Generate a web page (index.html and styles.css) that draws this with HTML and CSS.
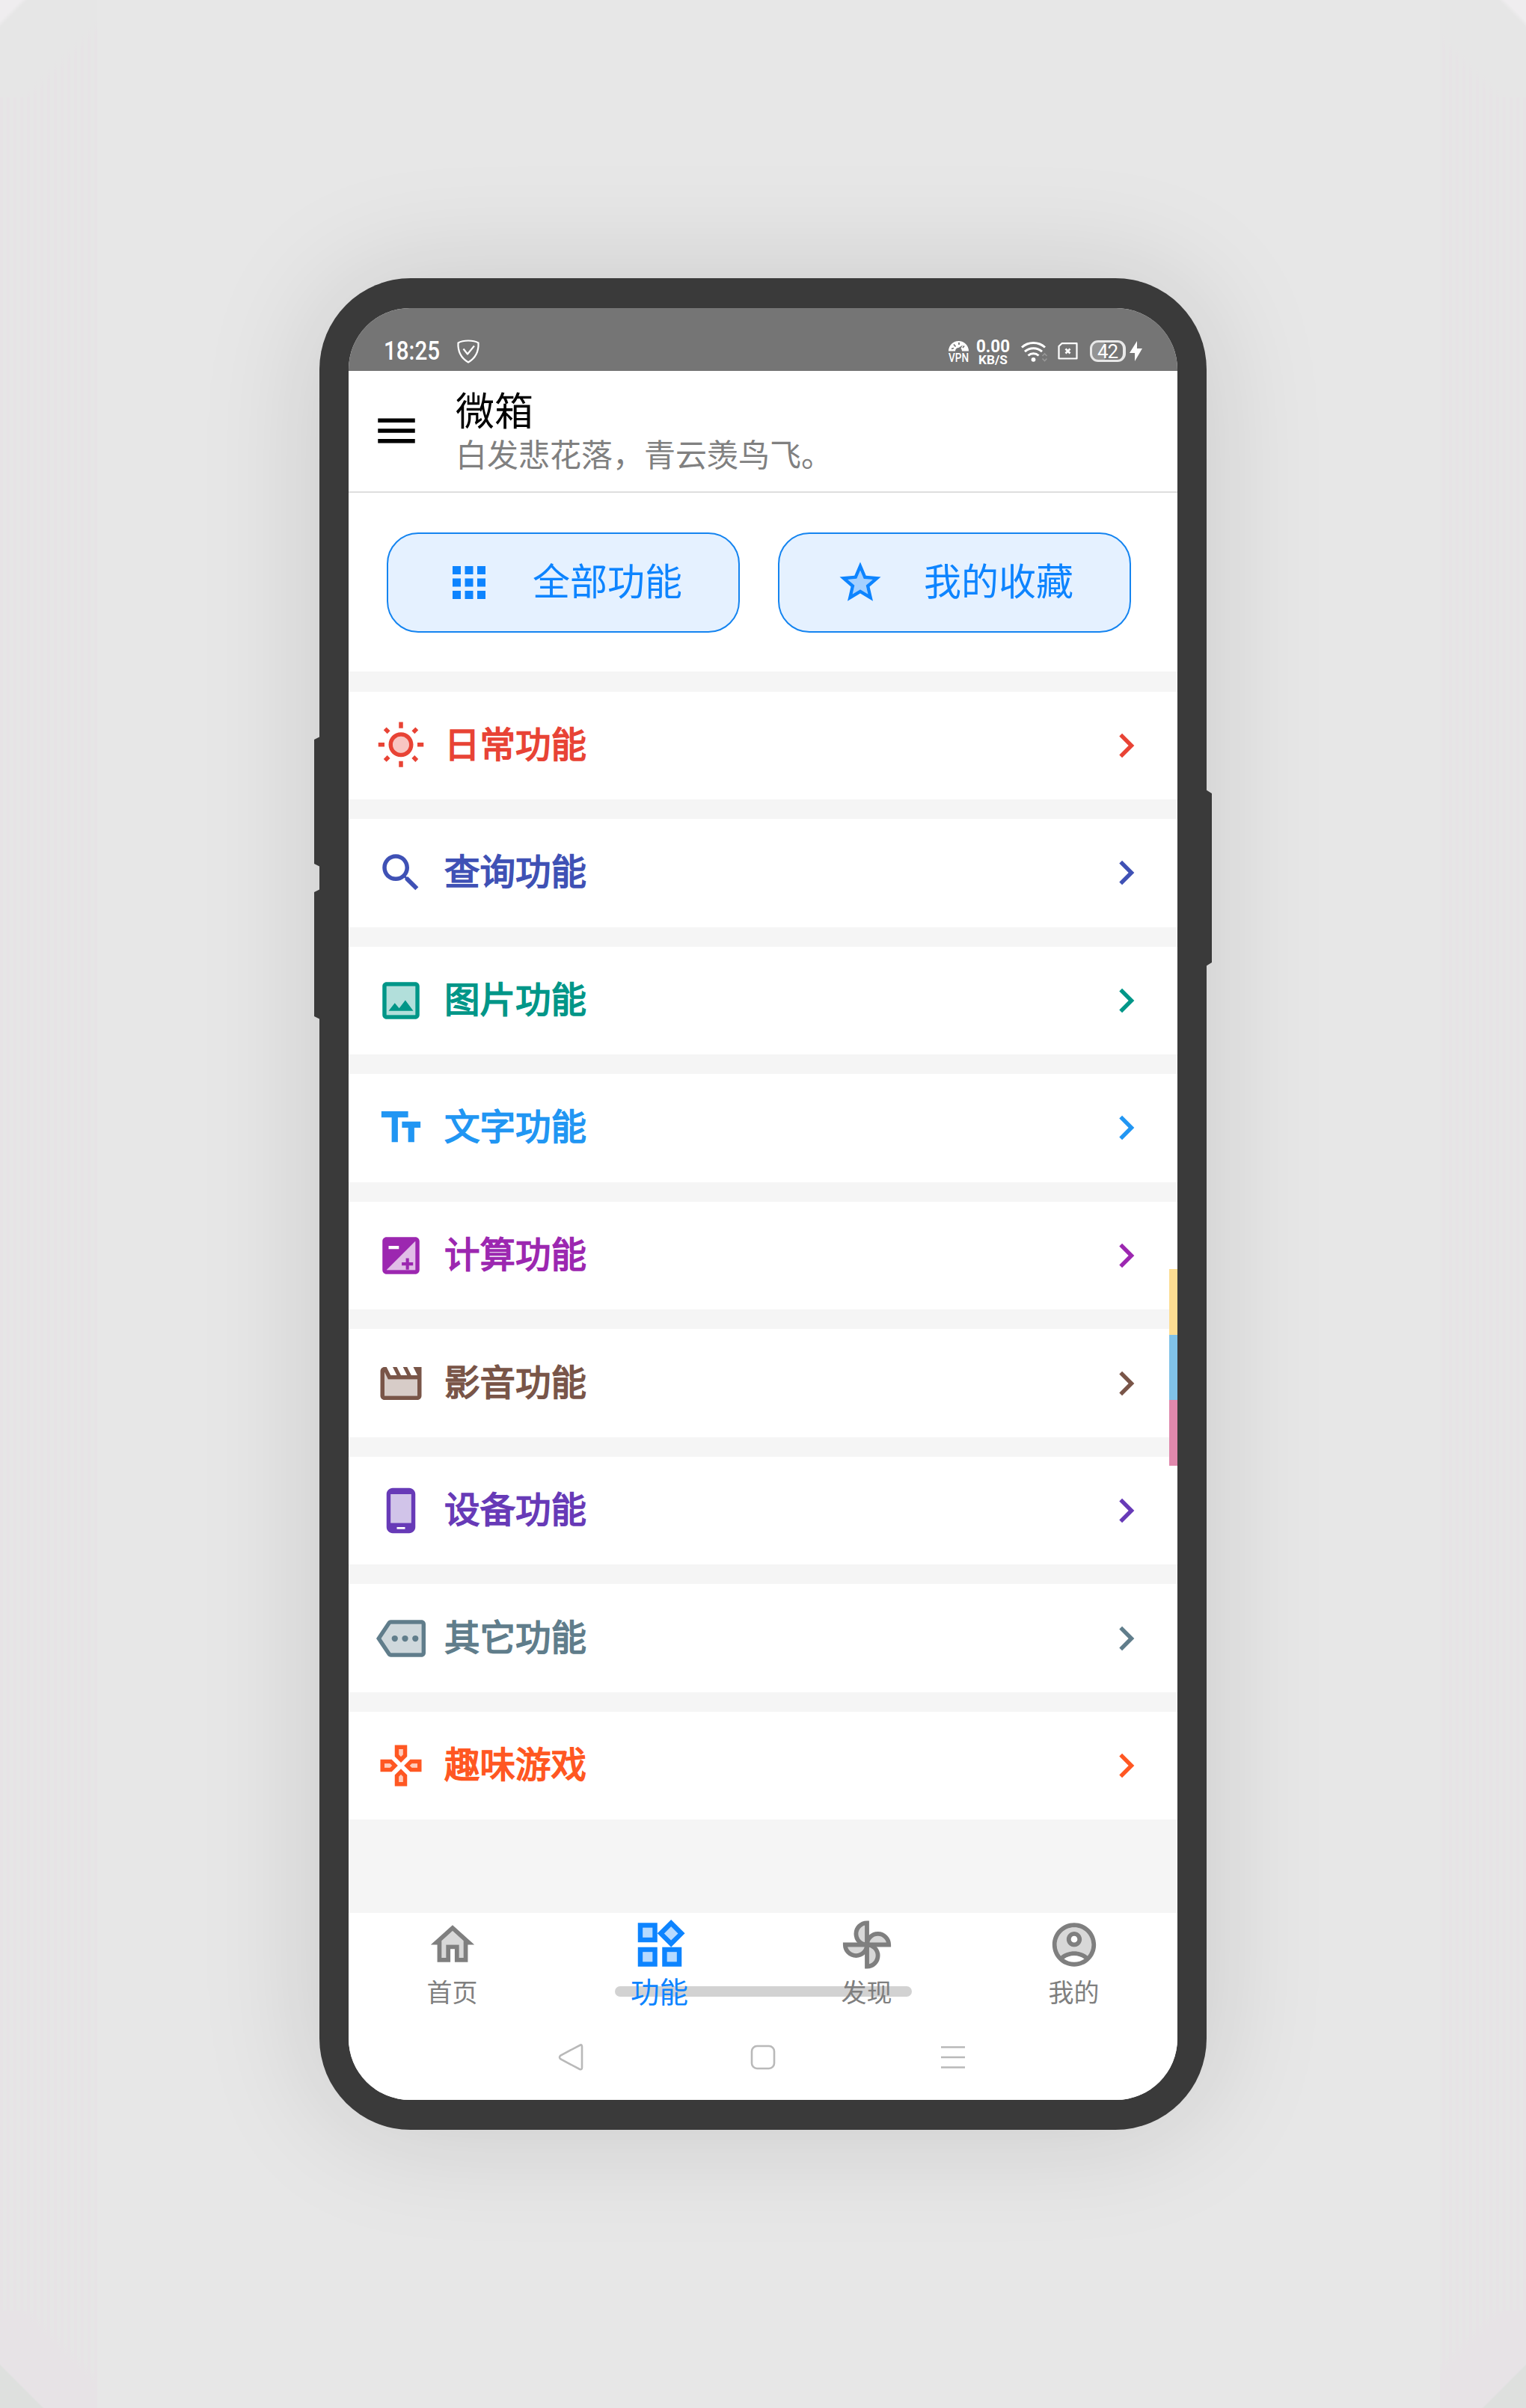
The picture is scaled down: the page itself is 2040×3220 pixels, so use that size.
FILE: index.html
```html
<!DOCTYPE html>
<html lang="zh-CN">
<head>
<meta charset="utf-8">
<title>微箱</title>
<link rel="stylesheet" href="styles.css">
</head>
<body>
<div class="phone">
  <i class="key key-up"></i><i class="key key-down"></i><i class="key key-power"></i>
  <div class="screen">
    <div class="status">
      <svg class="clock" viewBox="0 0 78 36"><text x="0" y="29" font-size="35" textLength="75" lengthAdjust="spacingAndGlyphs">18:25</text></svg>
      <svg class="shield" viewBox="0 0 30 32"><path d="M15 1.500C10 1.500 5 2.500 1.500 4.500C1 14 4 24 15 30.500C26 24 29 14 28.500 4.500C25 2.500 20 1.500 15 1.500zM8.500 12.500l5.500 7L23 8.500" fill="none" stroke="#fff" stroke-width="2.200" stroke-linejoin="round"/></svg>
      <svg class="vpn" viewBox="0 0 27 30"><path d="M0 14.500A13.500 13.500 0 0 1 27 14.500H18a4.500 4.500 0 0 0-1.500-3.500L19 6.500l-5.500 3.500A4.500 4.500 0 0 0 9 14.500z" fill="#fff"/><path d="M4 11.500l3-1M7 5.500l2.500 3M14 3v3M21 7.500l-2 2.500" stroke="#757575" stroke-width="1.800"/><text x="0" y="29" font-size="17" textLength="27" lengthAdjust="spacingAndGlyphs">VPN</text></svg>
      <svg class="speed" viewBox="0 0 46 34"><text x="1" y="17.500" font-size="24" textLength="45" lengthAdjust="spacingAndGlyphs">0.00</text><text x="4" y="34" font-size="17" textLength="39" lengthAdjust="spacingAndGlyphs">KB/S</text></svg>
      <svg class="wifi" viewBox="0 0 35 28"><g fill="none" stroke="#fff" stroke-width="3"><path d="M1 8.500A23 23 0 0 1 32 8.500"/><path d="M5 14.200A17 17 0 0 1 28 14.200"/><path d="M9.500 19.500A10.500 10.500 0 0 1 23.500 19.500"/></g><circle cx="16.500" cy="24.800" r="2.900" fill="#fff"/><path d="M28.500 20l3-3 3 3M28.500 23.500l3 3 3-3" fill="none" stroke="#979797" stroke-width="1.600"/></svg>
      <svg class="sim" viewBox="0 0 27 23"><path d="M5.500 1.200H25.500V21.500H1.500V5z" fill="none" stroke="#fff" stroke-width="2.200" stroke-linejoin="round"/><path d="M10.500 8.500l6 6M16.500 8.500l-6 6" stroke="#fff" stroke-width="2.600"/></svg>
      <div class="battery"><span>42</span></div>
      <svg class="bolt" viewBox="0 0 17 27"><path d="M10 0L0 16h7v11L17 10h-7z" fill="#fff"/></svg>
    </div>
    <header class="bar">
      <svg class="ic menu" viewBox="0 0 24 24"><path d="M3 18h18v-2H3v2zm0-5h18v-2H3v2zm0-7v2h18V6H3z"/></svg>
      <div class="titles"><h1>微箱</h1><p>白发悲花落，青云羡鸟飞。</p></div>
    </header>
    <section class="quick">
      <a class="pill"><svg class="ic" viewBox="0 0 24 24"><path d="M4 8h4V4H4zM10 8h4V4h-4zM16 8h4V4h-4zM4 14h4v-4H4zM10 14h4v-4h-4zM16 14h4v-4h-4zM4 20h4v-4H4zM10 20h4v-4h-4zM16 20h4v-4h-4z"/></svg><span>全部功能</span></a>
      <a class="pill"><svg class="ic" viewBox="0 0 24 24"><path opacity=".3" d="M12 15.400l-3.760 2.270 1-4.280-3.320-2.880 4.380-.380L12 6.100l1.710 4.040 4.380.380-3.320 2.880 1 4.280z"/><path d="M22 9.240l-7.190-.620L12 2 9.190 8.630 2 9.240l5.460 4.730L5.820 21 12 17.270 18.180 21l-1.630-7.030L22 9.240zM12 15.400l-3.760 2.270 1-4.280-3.320-2.880 4.380-.380L12 6.100l1.710 4.040 4.380.380-3.320 2.880 1 4.280L12 15.400z"/></svg><span>我的收藏</span></a>
    </section>
    <main class="list">
      <a class="row red"><svg class="ic" viewBox="0 0 24 24"><circle cx="12" cy="11.500" r="4" opacity=".3"/><path d="M6.760 4.840l-1.800-1.790-1.410 1.410 1.790 1.790 1.420-1.410zM1 10.500h3v2H1zM11 .550h2V3.500h-2zM20.450 4.460l-1.410-1.410-1.790 1.790 1.410 1.410 1.790-1.790zM17.240 18.160l1.790 1.800 1.410-1.410-1.800-1.790-1.400 1.400zM20 10.500h3v2h-3zM12 5.500c-3.310 0-6 2.690-6 6s2.690 6 6 6 6-2.690 6-6-2.690-6-6-6zm0 10c-2.210 0-4-1.790-4-4s1.790-4 4-4 4 1.790 4 4-1.790 4-4 4zM11 19.500h2v2.950h-2zM3.550 18.540l1.410 1.410 1.790-1.800-1.410-1.410-1.790 1.800z"/></svg><span>日常功能</span><svg class="go" viewBox="0 0 24 24"><path d="M10 6L8.590 7.410 13.170 12l-4.580 4.590L10 18l6-6z"/></svg></a>
      <a class="row indigo"><svg class="ic" viewBox="0 0 24 24"><path d="M15.500 14h-.790l-.280-.270C15.410 12.590 16 11.110 16 9.500 16 5.910 13.090 3 9.500 3S3 5.910 3 9.500 5.910 16 9.500 16c1.610 0 3.090-.590 4.230-1.570l.270.280v.790l5 4.990L20.490 19l-4.990-5zm-6 0C7.010 14 5 11.990 5 9.500S7.010 5 9.500 5 14 7.010 14 9.500 11.990 14 9.500 14z"/></svg><span>查询功能</span><svg class="go" viewBox="0 0 24 24"><path d="M10 6L8.590 7.410 13.170 12l-4.580 4.590L10 18l6-6z"/></svg></a>
      <a class="row teal"><svg class="ic" viewBox="0 0 24 24"><path opacity=".3" d="M5 5h14v14H5z"/><path d="M19 3H5c-1.100 0-2 .900-2 2v14c0 1.100.900 2 2 2h14c1.100 0 2-.900 2-2V5c0-1.100-.900-2-2-2zm0 16H5V5h14v14zM14.140 11.860l-3 3.870L9 13.140 6 17h12z"/></svg><span>图片功能</span><svg class="go" viewBox="0 0 24 24"><path d="M10 6L8.590 7.410 13.170 12l-4.580 4.590L10 18l6-6z"/></svg></a>
      <a class="row blue"><svg class="ic" viewBox="0 0 24 24"><path d="M2.500 4v3h5v12h3V7h5V4h-13zM21.500 9h-9v3h3v7h3v-7h3V9z"/></svg><span>文字功能</span><svg class="go" viewBox="0 0 24 24"><path d="M10 6L8.590 7.410 13.170 12l-4.580 4.590L10 18l6-6z"/></svg></a>
      <a class="row purple"><svg class="ic" viewBox="0 0 24 24"><path opacity=".3" d="M19 19V5L5 19h14z"/><path fill-rule="evenodd" d="M19 3H5c-1.100 0-2 .900-2 2v14c0 1.100.900 2 2 2h14c1.100 0 2-.900 2-2V5c0-1.100-.900-2-2-2zM19 19H5L19 5zM6 7.300h5v1.500H6z"/><path d="M14.400 13.300h1.500v2h2v1.500h-2v2h-1.500v-2h-2v-1.500h2z"/></svg><span>计算功能</span><svg class="go" viewBox="0 0 24 24"><path d="M10 6L8.590 7.410 13.170 12l-4.580 4.590L10 18l6-6z"/></svg></a>
      <a class="row brown"><svg class="ic" viewBox="0 0 24 24"><path opacity=".3" d="M5.760 10L4 6.470V18h16v-8z"/><path d="M18 4l2 4h-3l-2-4h-2l2 4h-3l-2-4H8l2 4H7L5 4H4c-1.100 0-1.990.900-1.990 2L2 18c0 1.100.900 2 2 2h16c1.100 0 2-.900 2-2V4h-4zm2 14H4V6.470L5.760 10H20v8z"/></svg><span>影音功能</span><svg class="go" viewBox="0 0 24 24"><path d="M10 6L8.590 7.410 13.170 12l-4.580 4.590L10 18l6-6z"/></svg></a>
      <a class="row violet"><svg class="ic" viewBox="0 0 24 24"><path opacity=".3" d="M7 4h10v14H7z"/><path fill-rule="evenodd" d="M16 1H8C6.340 1 5 2.340 5 4v16c0 1.660 1.340 3 3 3h8c1.660 0 3-1.340 3-3V4c0-1.660-1.340-3-3-3zM14 21h-4v-1h4zM17 18H7V4h10z"/></svg><span>设备功能</span><svg class="go" viewBox="0 0 24 24"><path d="M10 6L8.590 7.410 13.170 12l-4.580 4.590L10 18l6-6z"/></svg></a>
      <a class="row slate"><svg class="ic" viewBox="0 0 24 24"><path opacity=".3" d="M7.060 5L2.400 12l4.670 7H22V5z"/><path d="M22 3H7c-.690 0-1.230.350-1.590.880L0 12l5.410 8.110c.360.530.970.890 1.660.890H22c1.100 0 2-.900 2-2V5c0-1.100-.900-2-2-2zm0 16H7.070L2.400 12l4.660-7H22v14z"/><circle cx="9" cy="12" r="1.500"/><circle cx="14" cy="12" r="1.500"/><circle cx="19" cy="12" r="1.500"/></svg><span>其它功能</span><svg class="go" viewBox="0 0 24 24"><path d="M10 6L8.590 7.410 13.170 12l-4.580 4.590L10 18l6-6z"/></svg></a>
      <a class="row orange"><svg class="ic" viewBox="0 0 24 24"><path opacity=".3" d="M13 6.670V4h-2v2.670l1 1zM6.670 11H4v2h2.670l1-1zM11 17.330V20h2v-2.670l-1-1zM16.330 12l1 1H20v-2h-2.670z"/><path fill-rule="evenodd" d="M15 7.500V2H9v5.500l3 3 3-3zM13 6.670l-1 1-1-1V4h2zM7.500 9H2v6h5.500l3-3-3-3zM6.670 13H4v-2h2.670l1 1zM9 16.500V22h6v-5.500l-3-3-3 3zM13 20h-2v-2.670l1-1 1 1zM16.500 9l-3 3 3 3H22V9h-5.500zM20 13h-2.670l-1-1 1-1H20z"/></svg><span>趣味游戏</span><svg class="go" viewBox="0 0 24 24"><path d="M10 6L8.590 7.410 13.170 12l-4.580 4.590L10 18l6-6z"/></svg></a>
    </main>
    <nav class="tabs">
      <a class="tab"><svg viewBox="0 0 24 24"><path opacity=".3" d="M12 5.690l-5 4.500V18h2v-6h6v6h2v-7.810z"/><path d="M12 3L2 12h3v8h6v-6h2v6h6v-8h3L12 3zm5 15h-2v-6H9v6H7v-7.810l5-4.500 5 4.500V18z"/></svg><span>首页</span></a>
      <a class="tab active"><svg viewBox="0 0 24 24"><path opacity=".3" d="M5 5h4v4H5zM5 15h4v4H5zM15 15h4v4h-4zM16.660 4.520l-2.830 2.820 2.830 2.830 2.830-2.830z"/><path fill-rule="evenodd" d="M16.660 1.690L11 7.340 16.660 13l5.660-5.660zM16.660 4.520l2.830 2.830-2.830 2.830-2.830-2.830zM3 3h8v8H3zM5 5v4h4V5zM13 13h8v8h-8zM15 15v4h4v-4zM3 13h8v8H3zM5 15v4h4v-4z"/></svg><span>功能</span></a>
      <a class="tab"><svg viewBox="0 0 24 24"><g fill-opacity=".3" stroke="currentColor" stroke-width="2"><path d="M12 12V2a5 5 0 0 0 0 10z"/><path d="M12 12h10a5 5 0 0 0-10 0z"/><path d="M12 12v10a5 5 0 0 0 0-10z"/><path d="M12 12H2a5 5 0 0 0 10 0z"/></g></svg><span>发现</span></a>
      <a class="tab"><svg viewBox="0 0 24 24"><path opacity=".3" fill-rule="evenodd" d="M12 4c-4.420 0-8 3.580-8 8 0 1.950.700 3.730 1.860 5.120C7.550 15.800 9.680 15 12 15s4.450.800 6.140 2.120C19.300 15.730 20 13.950 20 12c0-4.420-3.580-8-8-8zm0 9c-1.930 0-3.500-1.570-3.500-3.500S10.070 6 12 6s3.500 1.570 3.500 3.500S13.930 13 12 13z"/><path d="M12 2C6.480 2 2 6.480 2 12s4.480 10 10 10 10-4.480 10-10S17.520 2 12 2zM7.350 18.500C8.660 17.560 10.260 17 12 17s3.340.560 4.650 1.500C15.340 19.440 13.740 20 12 20s-3.340-.560-4.650-1.500zm10.790-1.380C16.450 15.800 14.320 15 12 15s-4.450.800-6.140 2.120C4.700 15.730 4 13.950 4 12c0-4.420 3.580-8 8-8s8 3.580 8 8c0 1.950-.700 3.730-1.860 5.120zM12 6c-1.930 0-3.500 1.570-3.500 3.500S10.070 13 12 13s3.500-1.570 3.500-3.500S13.930 6 12 6zm0 5c-.830 0-1.500-.670-1.500-1.500S11.170 8 12 8s1.500.670 1.500 1.500S12.830 11 12 11z"/></svg><span>我的</span></a>
      <i class="indicator"></i>
    </nav>
    <div class="sysnav">
      <svg class="back" viewBox="0 0 34 38"><path d="M30 2.500Q32 2 32 5V33Q32 36 29 35L3.500 21.500Q.500 19 3.500 16.500z"/></svg>
      <svg class="homekey" viewBox="0 0 34 34"><rect x="2" y="2" width="30" height="30" rx="7"/></svg>
      <svg class="recent" viewBox="0 0 34 34"><path d="M1 3.500h32M1 17h32M1 30.500h32"/></svg>
    </div>
    <div class="edge"><i class="e1"></i><i class="e2"></i><i class="e3"></i></div>
  </div>
</div>
</body>
</html>
```
FILE: styles.css
```css
* { box-sizing: border-box; }
html, body { margin: 0; }
body {
  width: 2040px; height: 3220px; overflow: hidden;
  padding: 372px 0 0 427px;
  background:
    linear-gradient(45deg, #dee0de 40px, #e7e3e6 42px 110px, rgba(231, 227, 230, 0) 125px) 0 100% / 130px 130px no-repeat,
    linear-gradient(315deg, #dee0de 40px, #e7e3e6 42px 110px, rgba(231, 227, 230, 0) 125px) 100% 100% / 115px 130px no-repeat,
    linear-gradient(135deg, #efedef 20px, #e6e6e6 26px 110px, rgba(230, 230, 230, 0) 125px) 0 0 / 130px 130px no-repeat,
    linear-gradient(225deg, #efedef 20px, #e6e6e6 26px 110px, rgba(230, 230, 230, 0) 125px) 100% 0 / 115px 130px no-repeat,
    repeating-linear-gradient(90deg, #e7e3e6 0 4px, #e6e6e6 4px 9px) 0 0 / 130px 100% no-repeat,
    repeating-linear-gradient(270deg, #e7e3e6 0 4px, #e6e6e6 4px 9px) 100% 0 / 115px 100% no-repeat,
    #e7e7e7;
  font-family: Roboto, "Noto Sans CJK SC", sans-serif;
}
h1, p { margin: 0; font-weight: 400; }
svg { display: block; fill: currentColor; flex: none; overflow: visible; }
.phone {
  position: relative; width: 1186px; height: 2476px;
  padding: 40px 39px; background: #3a3a3a; border-radius: 122px;
  box-shadow: 0 0 165px rgba(0, 0, 0, .135);
}
.key { position: absolute; background: #3a3a3a; width: 8px; left: -7px; clip-path: polygon(0 4px, 100% 0, 100% 100%, 0 calc(100% - 4px)); }
.key-up { top: 613px; height: 174px; }
.key-down { top: 817px; height: 174px; }
.key-power { left: auto; right: -7px; top: 684px; height: 236px; clip-path: polygon(0 0, 100% 5px, 100% calc(100% - 5px), 0 100%); }
.screen {
  position: relative; width: 1108px; height: 2396px; overflow: hidden;
  border-radius: 82px; background: #f5f5f5;
  display: flex; flex-direction: column;
}
.status {
  height: 84px; background: #757575; color: #fff; padding: 40px 48px 9px 47px;
  display: flex; align-items: center; flex: none;
}
.clock { width: 78px; height: 36px; margin-right: 20px; font-weight: 500; }
.shield { width: 30px; height: 32px; }
.vpn { margin-left: auto; width: 27px; height: 30px; font-weight: 500; }
.speed { width: 46px; height: 34px; margin-left: 9px; font-weight: 700; }
.wifi { width: 35px; height: 28px; margin-left: 15px; }
.sim { width: 27px; height: 23px; margin-left: 14px; }
.battery {
  margin-left: 16px; width: 48px; height: 29px; border: 3px solid #e8e8e8; border-right-width: 4px; border-radius: 11px;
  background: linear-gradient(90deg, #939393 42%, transparent 42%);
  display: flex; align-items: center; justify-content: center; font-size: 26px; letter-spacing: -1px;
}
.bolt { width: 17px; height: 27px; margin-left: 5px; margin-right: -1px; }
.bar {
  height: 163px; flex: none; background: #fff; border-bottom: 2px solid #dedede;
  display: flex; align-items: center; padding-left: 31px;
}
.ic { width: 66px; height: 68px; }
.menu { color: #000; margin-top: -1px; }
.titles { margin-left: 46px; margin-top: 7px; color: #000; }
.titles h1 { font-size: 52px; line-height: 60px; }
.titles p { font-size: 42px; line-height: 56px; color: #808080; }
.quick { height: 239px; flex: none; background: #fff; padding: 53px 62px 52px 51px; display: flex; gap: 51px; }
.pill {
  flex: 1; border: 2px solid #1484f0; border-radius: 42px; background: #e5f1ff; color: #0d84ff;
  display: flex; align-items: center; justify-content: center; gap: 52px; font-size: 50px;
}
.pill span { line-height: 60px; }
.list { flex: none; padding-top: 26.600px; display: flex; flex-direction: column; gap: 26.050px; }
.row {
  height: 144.500px; background: #fff; display: flex; align-items: center; padding: 0 36px 0 37px;
  font-size: 47.500px;
}
.row span { margin-left: 25px; line-height: 60px; flex: 1; -webkit-text-stroke: 1.700px currentColor; }
.go { width: 65px; height: 68px; }
.red { color: #e84335; } .indigo { color: #3f51b5; } .teal { color: #009688; }
.blue { color: #2196f3; } .purple { color: #9c27b0; } .brown { color: #795548; }
.violet { color: #673ab7; } .slate { color: #607d8b; } .orange { color: #ff5722; }
.tabs {
  position: relative; z-index: 0; margin-top: auto; height: 136px; flex: none; background: #fff; color: #7f7f7f;
  display: flex;
}
.tab { flex: 1; display: flex; flex-direction: column; align-items: center; font-size: 34px; padding-top: 6px; }
.tab svg { width: 70px; height: 73px; }
.tab span { line-height: 40px; margin-top: 8px; }
.active { color: #0d84ff; font-size: 38.500px; padding-top: 2px; }
.active svg { width: 78px; height: 81px; }
.active span { margin-top: 4px; }
.indicator { position: absolute; z-index: -1; left: 356px; top: 98px; width: 397px; height: 14px; border-radius: 7px; background: #d2d2d2; }
.sysnav { height: 114px; flex: none; background: #fff; display: flex; padding: 38px 0 0 280px; }
.sysnav svg { fill: none; stroke: #b9b9b9; stroke-width: 2.600; }
.back { width: 34px; height: 38px; }
.homekey { width: 34px; height: 34px; margin: 2px 0 0 223px; }
.recent { width: 34px; height: 34px; margin: 2px 0 0 220px; }
.edge { position: absolute; right: 0; top: 1285px; width: 11px; display: flex; flex-direction: column; }
.edge i { height: 87.500px; }
.e1 { background: #fddd92; } .e2 { background: #80c2e8; } .e3 { background: #e088ac; }
```
